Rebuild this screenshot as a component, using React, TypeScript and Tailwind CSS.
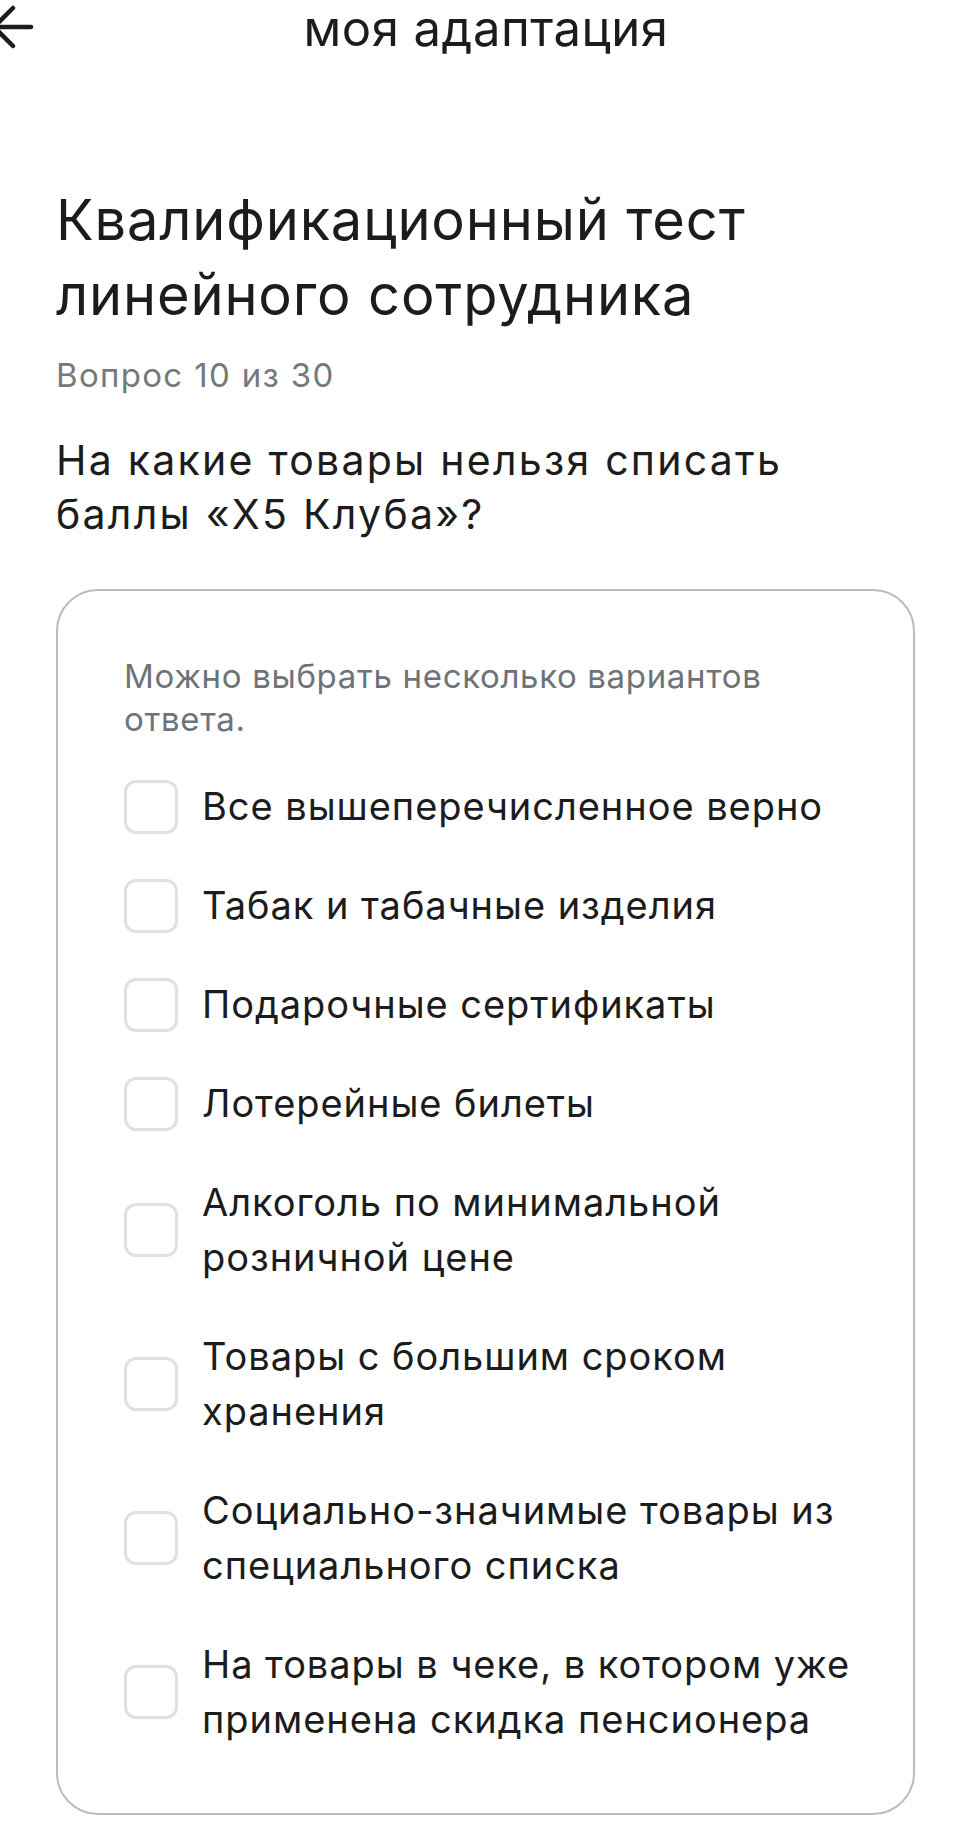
import { useState } from "react";

const options = [
  "Все вышеперечисленное верно",
  "Табак и табачные изделия",
  "Подарочные сертификаты",
  "Лотерейные билеты",
  "Алкоголь по минимальной розничной цене",
  "Товары с большим сроком хранения",
  "Социально-значимые товары из специального списка",
  "На товары в чеке, в котором уже применена скидка пенсионера",
];

const BackArrow = () => (
  <svg width="48" height="48" viewBox="0 0 48 48" fill="none" stroke="#1c1c1c" strokeWidth="4.5" strokeLinecap="round" strokeLinejoin="round">
    <path d="M43 24H6" />
    <path d="M25 5L6 24L25 43" />
  </svg>
);

export default function App() {
  const [checked, setChecked] = useState<number[]>([]);

  const toggle = (i: number) =>
    setChecked((prev) => (prev.includes(i) ? prev.filter((x) => x !== i) : [...prev, i]));

  return (
    <div className="min-h-screen bg-white text-[#1c1c1c]" style={{ fontFamily: "Inter, 'Noto Sans', sans-serif" }}>
      <header className="relative flex h-[56px] items-center justify-center">
        <button className="absolute left-[-12px] top-[3px]">
          <BackArrow />
        </button>
        <h1 className="text-[49px] leading-none tracking-[0.01em]">моя адаптация</h1>
      </header>

      <main className="pl-[56px] pr-[57px] pb-10">
        <h2 className="mt-[127px] text-[56px] leading-[75px] tracking-[0.015em]">
          Квалификационный тест линейного сотрудника
        </h2>
        <p className="mt-[22px] text-[33px] leading-[40px] tracking-[0.04em] text-[#76797c]">Вопрос 10 из 30</p>
        <p className="mt-[38px] text-[41px] leading-[54px] tracking-[0.055em]">
          На какие товары нельзя списать баллы «Х5 Клуба»?
        </p>

        <div className="mt-[48px] rounded-[42px] border-2 border-[#b8bcbf] pl-[66px] pr-[46px] pt-[64px] pb-[66px]">
          <p className="text-[33px] leading-[43px] tracking-[0.02em] text-[#6e7379]">
            Можно выбрать несколько вариантов ответа.
          </p>
          <div className="mt-[38px] flex flex-col gap-[44px]">
            {options.map((label, i) => (
              <label key={i} className="flex cursor-pointer items-center gap-[24px]" onClick={() => toggle(i)}>
                <span
                  className={`flex h-[54px] w-[54px] shrink-0 items-center justify-center rounded-[12px] border-[3px] ${
                    checked.includes(i) ? "border-[#5faf2d] bg-[#5faf2d]" : "border-[#e0e0e0] bg-white"
                  }`}
                >
                  {checked.includes(i) && (
                    <svg width="28" height="28" viewBox="0 0 24 24" fill="none" stroke="white" strokeWidth="3" strokeLinecap="round" strokeLinejoin="round">
                      <path d="M5 12l5 5L19 7" />
                    </svg>
                  )}
                </span>
                <span className="text-[38px] leading-[55px] tracking-[0.025em]">{label}</span>
              </label>
            ))}
          </div>
        </div>
      </main>
    </div>
  );
}
